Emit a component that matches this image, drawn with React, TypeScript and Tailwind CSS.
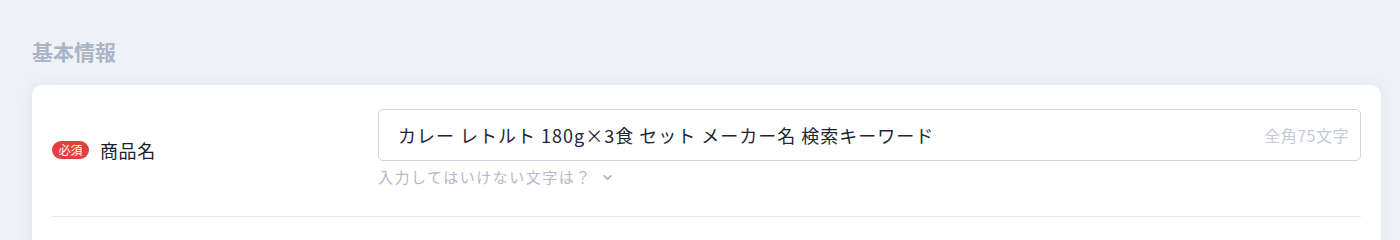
import { ChevronDown } from 'lucide-react'

const font = { fontFamily: '"Noto Sans CJK JP", "Noto Sans", sans-serif' }

export default function App() {
  return (
    <div className="min-h-screen bg-[#eef1f6] pl-8 pr-[19px] pt-[36px] pb-10" style={font}>
      <h2 className="text-[21px] leading-[30px] font-bold text-[#a9b5c6] mb-[19px]">基本情報</h2>

      <div className="bg-white rounded-[10px] shadow-[0_0_12px_rgba(160,174,192,0.18)] px-5">
        {/* 商品名 */}
        <div className="flex pt-6 pb-[28px] border-b border-[#e2e8f0]">
          <div className="w-[326px] shrink-0 flex items-center gap-[11px] pt-[3px]">
            <span className="inline-flex items-center justify-center h-[18px] w-[37px] rounded-full bg-[#e53e3e] text-white text-[12px] leading-none">
              必須
            </span>
            <span className="text-[18px] tracking-[0.6px] text-[#1a202c]">商品名</span>
          </div>

          <div className="flex-1">
            <div className="flex items-center h-[52px] border border-[#cfd6df] rounded-[5px] pl-[19px] pr-[11px]">
              <span className="flex-1 text-[18px] text-[#1f2633] tracking-[1px]">
                カレー レトルト 180g×3食 セット メーカー名 検索キーワード
              </span>
              <span className="text-[16px] tracking-[0.5px] text-[#c3cad6]">全角75文字</span>
            </div>
            <button className="mt-[5px] flex items-center gap-[9px] text-[15px] tracking-[1.5px] leading-[22px] text-[#b1bac8]">
              入力してはいけない文字は？
              <ChevronDown size={13} strokeWidth={3} className="text-[#a9b3c2]" />
            </button>
          </div>
        </div>

        <div className="h-[60px]" />
      </div>
    </div>
  )
}
